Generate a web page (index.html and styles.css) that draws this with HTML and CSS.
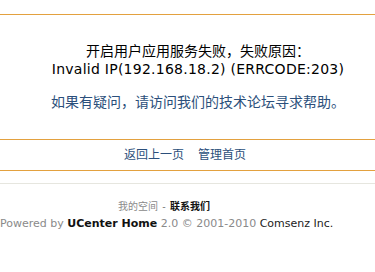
FILE: index.html
```html
<!DOCTYPE html>
<html lang="zh-CN">
<head>
<meta charset="utf-8">
<title>提示信息</title>
<link rel="stylesheet" href="styles.css">
</head>
<body>
<div class="rule rule-orange rule-first"></div>
<div class="msg">
  <p class="msg-title">开启用户应用服务失败，失败原因：</p>
  <p class="msg-reason">Invalid IP(192.168.18.2) (ERRCODE:203)</p>
  <p class="msg-help">如果有疑问，请访问我们的技术论坛寻求帮助。</p>
</div>
<div class="rule rule-orange rule-mid"></div>
<div class="ops"><a href="#">返回上一页</a><a href="#">管理首页</a></div>
<div class="rule rule-orange"></div>
<div class="rule rule-gray"></div>
<div class="footer">
  <p class="footer-links"><span class="muted">我的空间</span> - <span class="strong">联系我们</span></p>
  <p class="footer-copy"><span class="muted">Powered by</span> <b class="strong">UCenter Home</b> <span class="muted">2.0 © 2001-2010</span> <span class="dark">Comsenz Inc.</span></p>
</div>
</body>
</html>
```

FILE: styles.css
```css
body {
  margin: 0;
  background: #fff;
  font-family: "DejaVu Sans", "Noto Sans CJK SC", sans-serif;
  color: #000;
}
.rule {
  height: 1px;
}
.rule-orange {
  background: #e3a13f;
}
.rule-first {
  margin-top: 14px;
}
.rule-mid {
  margin-top: 28px;
}
.rule-gray {
  background: #e6e6df;
  margin-top: 12px;
}
.msg {
  padding: 25px 0 0 21px;
  text-align: center;
}
.msg p {
  margin: 0;
  font-size: 14px;
  line-height: 20px;
}
.msg-title {
  font-family: "Noto Sans CJK SC", sans-serif;
}
.msg-reason {
  letter-spacing: 0.25px;
  margin-top: -1px !important;
}
.msg-help {
  margin-top: 12px !important;
  color: #2b4f7b;
  font-family: "Noto Sans CJK SC", sans-serif;
}
.ops {
  padding: 6px 5px 8px 0;
  text-align: center;
  font-size: 12px;
  line-height: 16px;
  font-family: "Noto Sans CJK SC", sans-serif;
}
.ops a {
  color: #2b4f7b;
  text-decoration: none;
  margin: 0 7px;
}
.footer {
  margin-top: 13px;
  padding-right: 47px;
  text-align: center;
  font-size: 11px;
  line-height: 18px;
  white-space: nowrap;
}
.footer p {
  margin: 0;
}
.footer-links {
  font-family: "Noto Sans CJK SC", sans-serif;
  color: #666;
  font-size: 10px;
  word-spacing: 2px;
}
.muted {
  color: #8a8a8a;
}
.strong {
  color: #111;
  font-weight: bold;
}
.dark {
  color: #222;
}
```
